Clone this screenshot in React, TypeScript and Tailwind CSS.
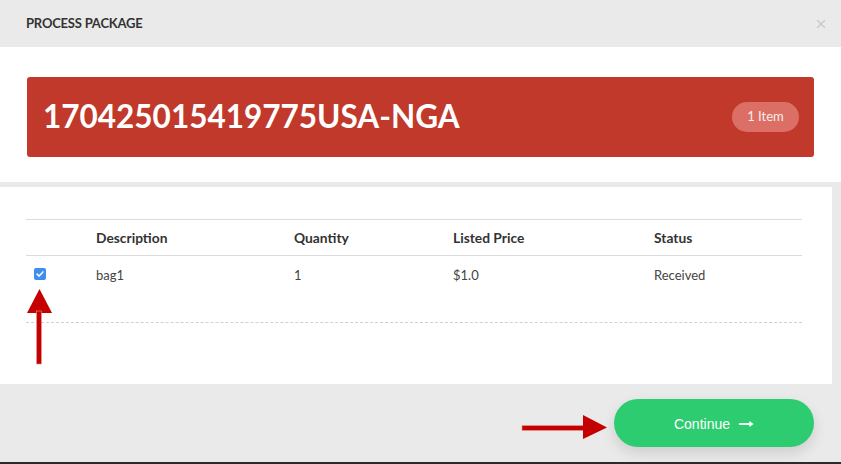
import { X } from "lucide-react"

export default function App() {
  const columns = ["", "Description", "Quantity", "Listed Price", "Status"]
  const rows = [{ description: "bag1", quantity: "1", price: "$1.0", status: "Received" }]

  return (
    <div className="relative flex h-[464px] w-[841px] flex-col overflow-hidden bg-[#eaeaea] font-['Lato',sans-serif] text-[#333]">
      {/* modal header */}
      <div className="flex h-[47px] shrink-0 items-center justify-between pl-[26px] pr-[13px]">
        <h1 className="text-[13px] font-bold tracking-[-0.2px] text-[#333]">PROCESS PACKAGE</h1>
        <X className="h-[14px] w-[14px] text-[#c8c8c8]" strokeWidth={2} />
      </div>

      {/* package banner */}
      <div className="h-[135px] shrink-0 bg-white px-[27px] pt-[30px]">
        <div className="flex h-[80px] items-center justify-between rounded-[3px] bg-[#c0392b] pl-[16px] pr-[15px]">
          <span className="text-[31.5px] font-bold text-white">170425015419775USA-NGA</span>
          <span className="flex h-[30px] w-[67px] items-center justify-center rounded-full bg-[#dc6f65] text-[13px] text-[#fbeceb]">
            1 Item
          </span>
        </div>
      </div>

      {/* items table */}
      <div className="mt-[5px] h-[197px] w-[832px] shrink-0 bg-white px-[26px] pt-[32px]">
        <div className="w-[776px]">
          <div className="grid h-[37px] grid-cols-[70px_198px_159px_201px_1fr] items-center border-y border-[#dcdcdc] pt-[1px] text-[13.8px] font-bold text-[#333]">
            {columns.map((c, i) => (
              <div key={i}>{c}</div>
            ))}
          </div>
          {rows.map((r) => (
            <div
              key={r.description}
              className="grid h-[67px] grid-cols-[70px_198px_159px_201px_1fr] items-start border-b border-dashed border-[#d0d0d0] pt-[10px] text-[13px] text-[#444]"
            >
              <div className="pl-[8px] pt-[2px]">
                <span className="flex h-[12px] w-[12px] items-center justify-center rounded-[2px] bg-[#3d8ef0]">
                  <svg viewBox="0 0 12 12" className="h-[10px] w-[10px]">
                    <path d="M2.5 6.2 L5 8.5 L9.5 3.5" fill="none" stroke="white" strokeWidth="1.8" strokeLinecap="round" strokeLinejoin="round" />
                  </svg>
                </span>
              </div>
              <div>{r.description}</div>
              <div>{r.quantity}</div>
              <div>{r.price}</div>
              <div>{r.status}</div>
            </div>
          ))}
        </div>
      </div>

      {/* footer */}
      <div className="flex flex-1 items-start justify-end pr-[27px] pt-[15px]">
        <button className="flex h-[48px] w-[200px] items-center justify-center gap-[9px] rounded-full bg-[#2ecc71] pt-[2px] font-['Liberation_Sans',sans-serif] text-[14px] text-white shadow-[0_6px_14px_rgba(0,0,0,0.12)]">
          Continue
          <svg viewBox="0 0 16 8" className="h-[8px] w-[15px]">
            <path d="M0 4 H12" stroke="white" strokeWidth="2" />
            <path d="M11 0.8 L15.5 4 L11 7.2 Z" fill="white" />
          </svg>
        </button>
      </div>
      <div className="h-[2px] shrink-0 bg-[#2a2a2a]" />

      {/* annotation arrows */}
      <svg className="pointer-events-none absolute left-[26px] top-[289px]" width="28" height="77" viewBox="0 0 28 77">
        <polygon points="13.5,0 1,24 26,24" fill="#c40000" />
        <rect x="10.5" y="22" width="5" height="53" fill="#c40000" stroke="#e89a9a" strokeWidth="0.6" />
      </svg>
      <svg className="pointer-events-none absolute left-[521px] top-[414px]" width="88" height="27" viewBox="0 0 88 27">
        <rect x="1" y="11.5" width="64" height="5" fill="#c40000" stroke="#e89a9a" strokeWidth="0.6" />
        <polygon points="62,1 86,13.5 62,25" fill="#c40000" />
      </svg>
    </div>
  )
}
